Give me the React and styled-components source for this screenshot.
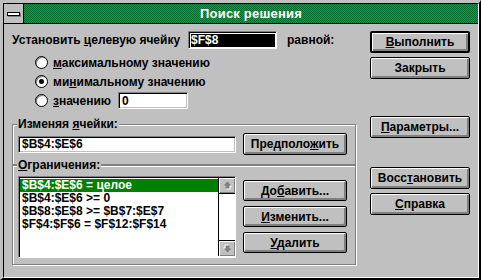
import styled, { createGlobalStyle } from "styled-components";

const GlobalStyle = createGlobalStyle`
  html, body {
    margin: 0;
    padding: 0;
    background: #c0c0c0;
  }
  body {
    font-family: "Liberation Sans", Arial, sans-serif;
    font-size: 12px;
    font-weight: bold;
    color: #000;
  }
`;

const Okno = styled.div`
  width: 481px;
  height: 280px;
  box-sizing: border-box;
  background: #c0c0c0;
  border-top: 3px solid #c0c0c0;
  border-left: 3px solid #c0c0c0;
  border-right: 2px solid #000;
  border-bottom: 2px solid #000;
  display: flex;
`;

const Ramka = styled.div`
  flex: 1;
  display: flex;
  flex-direction: column;
  border-top: 1px solid #000;
  border-left: 1px solid #000;
  border-right: 1px solid #fff;
  border-bottom: 1px solid #fff;
`;

const Zagolovok = styled.div`
  height: 19px;
  display: flex;
  border-bottom: 1px solid #000;
`;

const SistemnoeMenu = styled.div`
  width: 20px;
  box-sizing: border-box;
  border-right: 1px solid #000;
  background: #c0c0c0;
  display: flex;
  align-items: center;
  justify-content: center;

  span {
    width: 11px;
    height: 2px;
    background: #fff;
    border: 1px solid #000;
    box-shadow: 1px 1px 0 #808080;
  }
`;

const TekstZagolovka = styled.div`
  flex: 1;
  display: flex;
  align-items: center;
  justify-content: center;
  color: #fff;
  font-size: 13px;
  letter-spacing: 0.2px;
  background: repeating-conic-gradient(#0c9a48 0 25%, #006e30 0 50%) 0 0 / 2px 2px;
`;

const Klient = styled.div`
  flex: 1;
  display: flex;
  gap: 14px;
  padding-left: 8px;
`;

const LevayaChast = styled.div`
  width: 344px;
  display: flex;
  flex-direction: column;
`;

const PravayaChast = styled.div`
  width: 100px;
  display: flex;
  flex-direction: column;
  padding-top: 7px;
`;

const Stroka = styled.div`
  display: flex;
  align-items: center;
  height: ${(p) => p.$h || 18}px;
  margin-top: ${(p) => p.$mt || 0}px;
  padding-left: ${(p) => p.$pl || 0}px;
`;

const Metka = styled.span`
  white-space: nowrap;
  width: ${(p) => (p.$w ? `${p.$w}px` : "auto")};
  margin-left: ${(p) => p.$ml || 0}px;
`;

const Pole = styled.div`
  box-sizing: border-box;
  width: ${(p) => p.$w}px;
  height: ${(p) => p.$h || 17}px;
  margin-left: ${(p) => p.$ml || 0}px;
  border: 1px solid;
  border-color: #808080 #fff #fff #808080;
  box-shadow: inset 1px 1px 0 #000, inset -1px -1px 0 #c0c0c0;
  background: #fff;
  display: flex;
  align-items: center;
  padding-left: 3px;
  white-space: nowrap;
`;

const TselevoePole = styled(Pole)`
  background: #000;
  color: #fff;
  box-shadow: inset 1px 1px 0 #000, inset 2px 2px 0 #fff, inset -1px -1px 0 #fff;
  padding-left: 2px;
`;

const Pereklyuchatel = styled.span`
  width: 13px;
  height: 13px;
  box-sizing: border-box;
  border-radius: 50%;
  border: 1px solid #000;
  background: #fff;
  box-shadow: inset 1px 1px 0 #808080;
  display: flex;
  align-items: center;
  justify-content: center;
  margin-right: 5px;

  &::after {
    content: "";
    width: 5px;
    height: 5px;
    border-radius: 50%;
    background: ${(p) => (p.$on ? "#000" : "transparent")};
  }
`;

const Podcherk = styled.span`
  text-decoration: underline;
  text-underline-offset: 1px;
`;

const Knopka = styled.button`
  box-sizing: border-box;
  width: ${(p) => p.$w || 100}px;
  height: ${(p) => p.$h || 22}px;
  margin-top: ${(p) => p.$mt || 0}px;
  margin-left: ${(p) => p.$ml || 0}px;
  padding: 0;
  background: #c0c0c0;
  border: ${(p) => (p.$def ? 2 : 1)}px solid #000;
  border-radius: 2px;
  box-shadow: inset 1px 1px 0 #fff, inset -2px -2px 0 #808080;
  font-family: inherit;
  font-size: 12px;
  font-weight: bold;
  color: #000;
  white-space: nowrap;
  flex-shrink: 0;
`;

const Gruppa = styled.div`
  position: relative;
  box-sizing: border-box;
  width: 344px;
  height: ${(p) => p.$h}px;
  margin-top: ${(p) => p.$mt || 0}px;
  border: 1px solid #808080;
  box-shadow: inset 1px 1px 0 #fff, 1px 1px 0 #fff;
  padding: ${(p) => p.$pad};
  display: flex;
  align-items: ${(p) => p.$align || "flex-start"};
`;

const Legenda = styled.span`
  position: absolute;
  top: -8px;
  left: 4px;
  background: #c0c0c0;
  padding: 0 1px;
  line-height: 14px;
  white-space: nowrap;
`;

const Spisok = styled.div`
  box-sizing: border-box;
  width: 218px;
  height: 82px;
  border: 1px solid;
  border-color: #808080 #fff #fff #808080;
  box-shadow: inset 1px 1px 0 #000;
  background: #fff;
  display: flex;
  flex-shrink: 0;
`;

const Stroki = styled.div`
  flex: 1;
  padding: 2px 0 0 1px;
  display: flex;
  flex-direction: column;
`;

const StrokaSpiska = styled.div`
  height: 13px;
  line-height: 13px;
  padding-left: 2px;
  white-space: nowrap;
  background: ${(p) => (p.$sel ? "#008000" : "transparent")};
  color: ${(p) => (p.$sel ? "#fff" : "#000")};
`;

const Prokrutka = styled.div`
  width: 16px;
  border-left: 1px solid #000;
  display: flex;
  flex-direction: column;
  justify-content: space-between;
  background: #fff;
  margin: 1px 0;
`;

const Strelka = styled.div`
  height: 16px;
  box-sizing: border-box;
  background: #c0c0c0;
  box-shadow: inset 1px 1px 0 #fff, inset -1px -1px 0 #808080;
  border-${(p) => (p.$up ? "bottom" : "top")}: 1px solid #000;
  display: flex;
  align-items: center;
  justify-content: center;
`;

const KolonkaKnopok = styled.div`
  display: flex;
  flex-direction: column;
  gap: 5px;
  margin-left: 7px;
  margin-top: 4px;
`;

function StrelkaIkonka({ up }) {
  return (
    <svg width="9" height="9" viewBox="0 0 9 9">
      <g transform={up ? "" : "rotate(180 4.5 4.5)"}>
        <path d="M5.5 1.5 L9.5 5.5 L7.5 5.5 L7.5 8.5 L3.5 8.5 L3.5 5.5 L1.5 5.5 Z" fill="#fff" />
        <path d="M4.5 0.5 L8.5 4.5 L6.5 4.5 L6.5 7.5 L2.5 7.5 L2.5 4.5 L0.5 4.5 Z" fill="#808080" />
      </g>
    </svg>
  );
}

const ogranicheniya = [
  "$B$4:$E$6 = целое",
  "$B$4:$E$6 >= 0",
  "$B$8:$E$8 >= $B$7:$E$7",
  "$F$4:$F$6 = $F$12:$F$14",
];

export default function App() {
  return (
    <>
      <GlobalStyle />
      <Okno>
        <Ramka>
          <Zagolovok>
            <SistemnoeMenu>
              <span />
            </SistemnoeMenu>
            <TekstZagolovka>Поиск решения</TekstZagolovka>
          </Zagolovok>
          <Klient>
            <LevayaChast>
              <Stroka $mt={7}>
                <Metka $w={176}>
                  Установить <Podcherk>ц</Podcherk>елевую ячейку
                </Metka>
                <TselevoePole $w={89} $h={18}>
                  $F$8
                </TselevoePole>
                <Metka $ml={10}>равной:</Metka>
              </Stroka>

              <Stroka $h={19} $mt={4} $pl={23}>
                <Pereklyuchatel />
                <Metka>
                  <Podcherk>м</Podcherk>аксимальному значению
                </Metka>
              </Stroka>
              <Stroka $h={19} $pl={23}>
                <Pereklyuchatel $on />
                <Metka>
                  ми<Podcherk>н</Podcherk>имальному значению
                </Metka>
              </Stroka>
              <Stroka $h={19} $pl={23}>
                <Pereklyuchatel />
                <Metka>
                  <Podcherk>з</Podcherk>начению
                </Metka>
                <Pole $w={70} $ml={7}>
                  0
                </Pole>
              </Stroka>

              <Gruppa $h={41} $mt={14} $pad="8px 8px 9px 5px" $align="center">
                <Legenda>
                  Изменяя <Podcherk>я</Podcherk>чейки:
                </Legenda>
                <Pole $w={218}>$B$4:$E$6</Pole>
                <Knopka $w={104} $ml={7}>
                  Предполо<Podcherk>ж</Podcherk>ить
                </Knopka>
              </Gruppa>

              <Gruppa $h={100} $pad="10px 8px 6px 5px">
                <Legenda>
                  <Podcherk>О</Podcherk>граничения:
                </Legenda>
                <Spisok>
                  <Stroki>
                    {ogranicheniya.map((s, i) => (
                      <StrokaSpiska key={s} $sel={i === 0}>
                        {s}
                      </StrokaSpiska>
                    ))}
                  </Stroki>
                  <Prokrutka>
                    <Strelka $up>
                      <StrelkaIkonka up />
                    </Strelka>
                    <Strelka>
                      <StrelkaIkonka />
                    </Strelka>
                  </Prokrutka>
                </Spisok>
                <KolonkaKnopok>
                  <Knopka $w={104} $h={21}>
                    До<Podcherk>б</Podcherk>авить...
                  </Knopka>
                  <Knopka $w={104} $h={21}>
                    <Podcherk>И</Podcherk>зменить...
                  </Knopka>
                  <Knopka $w={104} $h={21}>
                    <Podcherk>У</Podcherk>далить
                  </Knopka>
                </KolonkaKnopok>
              </Gruppa>
            </LevayaChast>

            <PravayaChast>
              <Knopka $def>
                <Podcherk>В</Podcherk>ыполнить
              </Knopka>
              <Knopka $mt={4}>Закрыть</Knopka>
              <Knopka $mt={37}>
                <Podcherk>П</Podcherk>араметры...
              </Knopka>
              <Knopka $mt={29}>
                Восс<Podcherk>т</Podcherk>ановить
              </Knopka>
              <Knopka $mt={4}>
                <Podcherk>С</Podcherk>правка
              </Knopka>
            </PravayaChast>
          </Klient>
        </Ramka>
      </Okno>
    </>
  );
}
